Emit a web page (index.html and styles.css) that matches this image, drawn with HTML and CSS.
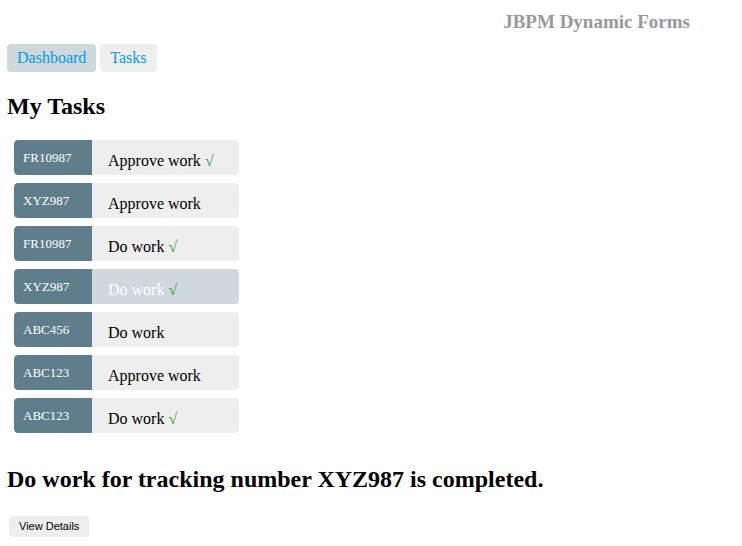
FILE: index.html
```html
<!DOCTYPE html>
<html>
<head>
<meta charset="utf-8">
<title>JBPM Dynamic Forms</title>
<link rel="stylesheet" href="styles.css">
</head>
<body>
  <header class="app-header">
    <div class="app-title">JBPM Dynamic Forms</div>
  </header>
  <nav class="nav">
    <a class="nav-link active" href="#">Dashboard</a>
    <a class="nav-link" href="#">Tasks</a>
  </nav>
  <h2 class="section-title">My Tasks</h2>
  <ul class="tasks">
    <li class="task"><span class="badge">FR10987</span><span class="task-name">Approve work <span class="check">√</span></span></li>
    <li class="task"><span class="badge">XYZ987</span><span class="task-name">Approve work</span></li>
    <li class="task"><span class="badge">FR10987</span><span class="task-name">Do work <span class="check">√</span></span></li>
    <li class="task selected"><span class="badge">XYZ987</span><span class="task-name">Do work <span class="check">√</span></span></li>
    <li class="task"><span class="badge">ABC456</span><span class="task-name">Do work</span></li>
    <li class="task"><span class="badge">ABC123</span><span class="task-name">Approve work</span></li>
    <li class="task"><span class="badge">ABC123</span><span class="task-name">Do work <span class="check">√</span></span></li>
  </ul>
  <h2 class="section-title">Do work for tracking number XYZ987 is completed.</h2>
  <div class="actions">
    <button class="btn">View Details</button>
  </div>
</body>
</html>
```
FILE: styles.css
```css
html, body {
  background: #fff;
}
body {
  margin: 8px 8px 8px 7px;
  font-family: "Liberation Serif", "Times New Roman", serif;
  color: #000;
}
.app-header {
  display: flex;
  justify-content: flex-end;
  padding-right: 44px;
  height: 28px;
}
.app-title {
  font-size: 19px;
  font-weight: bold;
  color: #999;
  line-height: 28px;
}
.nav {
  display: flex;
  gap: 4px;
  margin-top: 8px;
}
.nav-link {
  display: inline-block;
  padding: 5px 10px;
  background: #eee;
  border-radius: 4px;
  color: #039be5;
  text-decoration: none;
  font-size: 16px;
  line-height: 18px;
}
.nav-link.active {
  background: #cfd8dc;
}
.section-title {
  font-size: 24px;
  font-weight: bold;
  margin: 20px 0;
  line-height: 28px;
}
.tasks {
  list-style: none;
  margin: 0 0 32px 0;
  padding: 0;
}
.task {
  display: flex;
  width: 225px;
  height: 35px;
  margin: 8px 0 8px 7px;
  background: #eee;
  border-radius: 4px;
  overflow: hidden;
}
.task.selected {
  background: #cfd8dc;
}
.badge {
  width: 78px;
  box-sizing: border-box;
  padding: 11px 0 0 9px;
  background: #607d8b;
  color: #fff;
  font-size: 13px;
  line-height: 13px;
  border-radius: 4px 0 0 4px;
}
.task-name {
  padding: 12px 0 0 16px;
  font-size: 16px;
  line-height: 18px;
}
.task.selected .task-name {
  color: #fff;
}
.check {
  color: #2e9d3a;
}
.actions {
  padding-left: 2px;
  margin-top: 23px;
}
.btn {
  font-family: "Liberation Sans", Arial, sans-serif;
  font-size: 11px;
  line-height: 13px;
  padding: 4px 10px;
  background: #eee;
  border: none;
  border-radius: 4px;
  color: #000;
}
```
